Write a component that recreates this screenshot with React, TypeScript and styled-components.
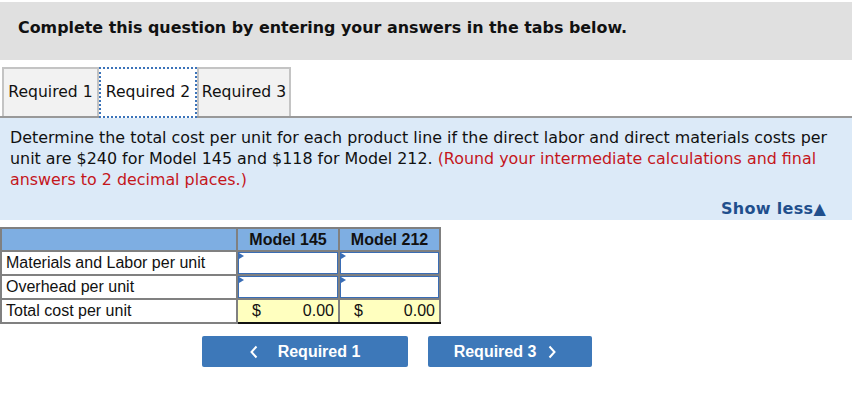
import React from 'react';
import styled, { createGlobalStyle } from 'styled-components';

const GlobalStyle = createGlobalStyle`
  body {
    margin: 0;
    background: #ffffff;
    font-family: 'DejaVu Sans', Verdana, sans-serif;
  }
`;

const Page = styled.div`
  width: 852px;
  padding-top: 2px;
`;

const Header = styled.div`
  height: 58px;
  box-sizing: border-box;
  padding: 16px 0 0 18px;
  background: #e0e0e0;
  font-family: 'DejaVu Sans', Verdana, sans-serif;
  font-weight: bold;
  font-size: 15.9px;
  color: #111;
`;

const TabBar = styled.div`
  display: flex;
  margin-top: 7px;
  padding-left: 2px;
  border-bottom: 2px solid #999999;
  height: 49px;
`;

const Tab = styled.div<{ $active?: boolean; $width: number }>`
  width: ${(p) => p.$width}px;
  box-sizing: border-box;
  height: ${(p) => (p.$active ? 51 : 49)}px;
  padding-top: 14px;
  text-align: center;
  font-size: 15.6px;
  color: #111;
  background: ${(p) => (p.$active ? '#ffffff' : '#f2f2f2')};
  border: 2px solid ${(p) => (p.$active ? 'transparent' : '#c4c4c4')};
  border-bottom: none;
  outline: ${(p) => (p.$active ? '2px dotted #3b73b9' : 'none')};
  outline-offset: -2px;
  position: relative;
  z-index: ${(p) => (p.$active ? 1 : 0)};
  white-space: nowrap;
`;

const Panel = styled.div`
  background: #dceaf8;
  padding: 9px 10px 2px 10px;
`;

const Prompt = styled.p`
  margin: 0;
  font-family: 'DejaVu Sans', Verdana, sans-serif;
  font-size: 15.9px;
  line-height: 21px;
  color: #111;
`;

const Note = styled.span`
  color: #c4161c;
`;

const ShowLess = styled.div`
  margin-top: 9px;
  line-height: 19px;
  text-align: right;
  padding-right: 16px;
  font-family: 'DejaVu Sans', Verdana, sans-serif;
  font-weight: bold;
  font-size: 16px;
  letter-spacing: 0.3px;
  color: #1f4f8d;
`;

const Table = styled.table`
  margin-top: 7px;
  border-collapse: collapse;
  font-family: 'Liberation Sans', Arial, sans-serif;
  font-size: 16px;
  color: #111;
  border: 2px solid #808080;
`;

const HeadCell = styled.th<{ $width: number }>`
  width: ${(p) => p.$width}px;
  height: 21px;
  padding: 0;
  background: #7eaee2;
  border: 2px solid #808080;
  font-weight: bold;
  text-align: center;
`;

const LabelCell = styled.td`
  height: 22px;
  padding: 0 0 0 4px;
  border: 2px solid #808080;
  text-align: left;
  background: #ffffff;
`;

const InputCell = styled.td`
  padding: 0;
  border: 2px solid #808080;
`;

const AnswerBox = styled.div`
  height: 22px;
  box-sizing: border-box;
  border: 1px solid #3a6db5;
  background: #ffffff;
  position: relative;

  &:before {
    content: '';
    position: absolute;
    left: 0;
    top: 0;
    border-left: 5px solid #3a6db5;
    border-top: 3px solid transparent;
    border-bottom: 3px solid transparent;
  }
`;

const TotalCell = styled.td`
  height: 22px;
  padding: 0 4px 0 14px;
  background: #ffffbf;
  border-top: 2px solid #111;
  border-bottom: 2px solid #111;
  border-left: 2px solid #808080;
  border-right: 2px solid #808080;
`;

const TotalInner = styled.div`
  display: flex;
  justify-content: space-between;
`;

const Nav = styled.div`
  display: flex;
  gap: 20px;
  margin-top: 12px;
  padding-left: 202px;
`;

const NavButton = styled.button<{ $width: number; $gap: number; $shift?: number }>`
  width: ${(p) => p.$width}px;
  height: 31px;
  display: flex;
  align-items: center;
  justify-content: center;
  gap: ${(p) => p.$gap}px;
  padding: 0 ${(p) => p.$shift ?? 0}px 0 0;
  border: none;
  border-radius: 2px;
  background: #3d78b9;
  color: #ffffff;
  font-family: 'Liberation Sans', Arial, sans-serif;
  font-weight: bold;
  font-size: 16px;
  cursor: pointer;
`;

const Chevron = ({ dir }: { dir: 'left' | 'right' }) => (
  <svg width="8" height="14" viewBox="0 0 8 14">
    <path
      d={dir === 'left' ? 'M6.5 1.5 L1.5 7 L6.5 12.5' : 'M1.5 1.5 L6.5 7 L1.5 12.5'}
      fill="none"
      stroke="#ffffff"
      strokeWidth="2"
    />
  </svg>
);

const rows = ['Materials and Labor per unit', 'Overhead per unit'];

export default function App() {
  return (
    <Page>
      <GlobalStyle />
      <Header>Complete this question by entering your answers in the tabs below.</Header>
      <TabBar>
        <Tab $width={97}>Required 1</Tab>
        <Tab $width={98} $active>
          Required 2
        </Tab>
        <Tab $width={94}>Required 3</Tab>
      </TabBar>
      <Panel>
        <Prompt>
          Determine the total cost per unit for each product line if the direct labor and direct
          materials costs per unit are $240 for Model 145 and $118 for Model 212.{' '}
          <Note>(Round your intermediate calculations and final answers to 2 decimal places.)</Note>
        </Prompt>
        <ShowLess>Show less▲</ShowLess>
      </Panel>
      <Table>
        <thead>
          <tr>
            <HeadCell $width={234} />
            <HeadCell $width={100}>Model 145</HeadCell>
            <HeadCell $width={99}>Model 212</HeadCell>
          </tr>
        </thead>
        <tbody>
          {rows.map((label) => (
            <tr key={label}>
              <LabelCell>{label}</LabelCell>
              <InputCell>
                <AnswerBox />
              </InputCell>
              <InputCell>
                <AnswerBox />
              </InputCell>
            </tr>
          ))}
          <tr>
            <LabelCell>Total cost per unit</LabelCell>
            <TotalCell>
              <TotalInner>
                <span>$</span>
                <span>0.00</span>
              </TotalInner>
            </TotalCell>
            <TotalCell>
              <TotalInner>
                <span>$</span>
                <span>0.00</span>
              </TotalInner>
            </TotalCell>
          </tr>
        </tbody>
      </Table>
      <Nav>
        <NavButton $width={206} $gap={20}>
          <Chevron dir="left" />
          Required 1
        </NavButton>
        <NavButton $width={164} $gap={12} $shift={10}>
          Required 3
          <Chevron dir="right" />
        </NavButton>
      </Nav>
    </Page>
  );
}
